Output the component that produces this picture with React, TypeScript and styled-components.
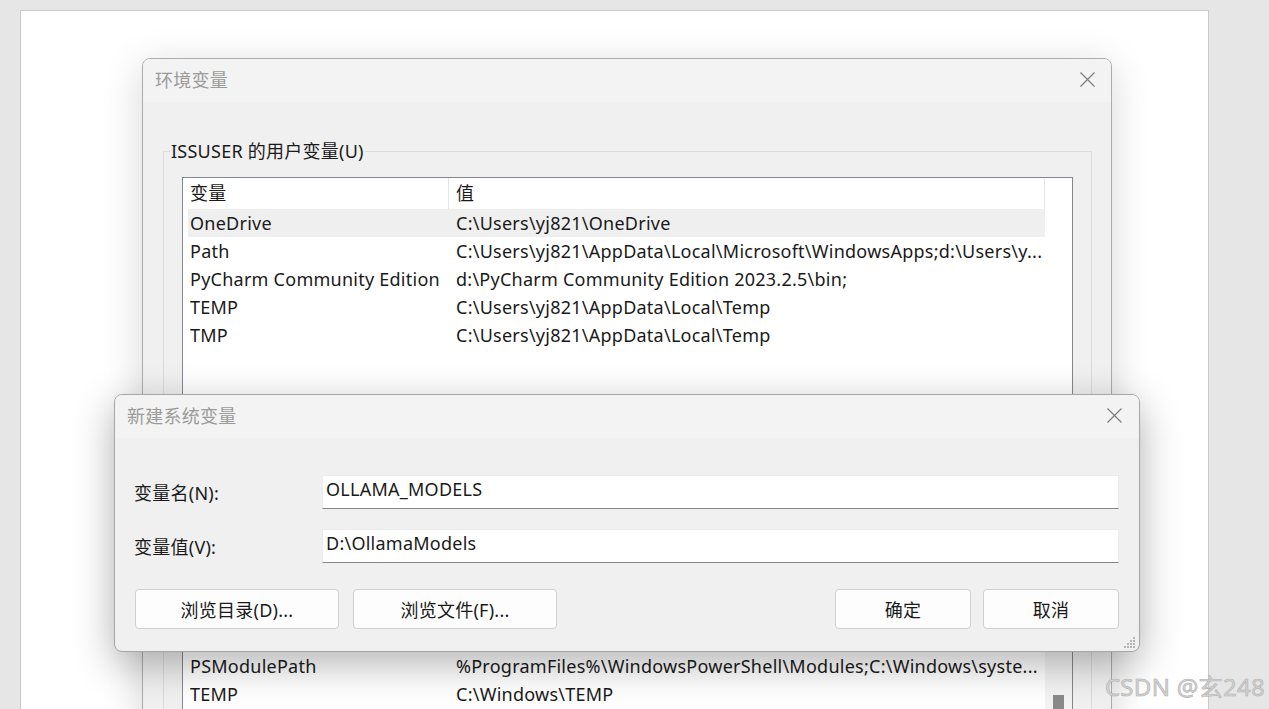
import React from 'react';
import styled, { createGlobalStyle } from 'styled-components';

const GlobalStyle = createGlobalStyle`
  html, body {
    margin: 0;
    padding: 0;
  }
  body {
    background: #e6e6e6;
    font-family: 'Noto Sans', 'Noto Sans CJK SC', sans-serif;
    letter-spacing: 0.25px;
    color: #1a1a1a;
  }
  * {
    box-sizing: border-box;
  }
`;

const Desktop = styled.div`
  position: relative;
  height: 100vh;
  overflow: hidden;
  padding: 10px 0 0 20px;
`;

const Page = styled.div`
  width: 1189px;
  height: 760px;
  background: #fff;
  border: 1px solid #cacaca;
  padding: 47px 0 0 121px;
`;

const Window = styled.div<{ $width: number }>`
  width: ${(p) => p.$width}px;
  background: #f0f0f0;
  border: 1px solid #acacac;
  border-radius: 8px;
  overflow: hidden;
`;

const EnvWindow = styled(Window)`
  box-shadow: 0 8px 40px rgba(0, 0, 0, 0.16);
`;

const DialogWindow = styled(Window)`
  position: absolute;
  left: 114px;
  top: 394px;
  height: 258px;
  border-color: #a6a6a6;
  box-shadow: 0 12px 40px rgba(0, 0, 0, 0.3);
`;

const TitleBar = styled.div<{ $right: number }>`
  height: 43px;
  background: #f3f3f3;
  display: flex;
  align-items: center;
  justify-content: space-between;
  padding: 0 ${(p) => p.$right}px 2px 12px;
`;

const Title = styled.div`
  font-size: 18px;
  color: #9a9a9a;
  line-height: 24px;
`;

const CloseIcon = () => (
  <svg width="15" height="15" viewBox="0 0 15 15">
    <path d="M0.5 0.5 L14.5 14.5 M14.5 0.5 L0.5 14.5" stroke="#7d7d7d" strokeWidth="1.2" fill="none" />
  </svg>
);

const EnvBody = styled.div`
  padding: 37px 19px 0 20px;
`;

const GroupBox = styled.fieldset<{ $top?: number; $padTop?: number; $padBottom?: number }>`
  margin: ${(p) => p.$top ?? 0}px 0 0 0;
  padding: ${(p) => p.$padTop ?? 14}px 18px ${(p) => p.$padBottom ?? 12}px 18px;
  border: 1px solid #dcdcdc;
  min-width: 0;
`;

const GroupLabel = styled.legend`
  font-size: 18px;
  line-height: 24px;
  padding: 0 1px;
  margin-left: -12px;
  color: #1a1a1a;
`;

const ListView = styled.div<{ $height: number }>`
  height: ${(p) => p.$height}px;
  background: #fff;
  border: 1px solid #828790;
  display: flex;
  overflow: hidden;
`;

const ListColumns = styled.div<{ $offset: number }>`
  width: 862px;
  flex: none;
  padding-top: ${(p) => p.$offset}px;
`;

const HeaderRow = styled.div`
  height: 31px;
  display: grid;
  grid-template-columns: 266px 596px;
  font-size: 18px;
  line-height: 30px;
`;

const HeaderCell = styled.div`
  padding-left: 7px;
  border-right: 1px solid #e5e5e5;
  white-space: nowrap;
`;

const Row = styled.div<{ $selected?: boolean }>`
  height: 28px;
  display: grid;
  grid-template-columns: 266px 596px;
  font-size: 18px;
  line-height: 28px;
  background: ${(p) => (p.$selected ? 'linear-gradient(to right, transparent 5px, #efefef 5px)' : 'transparent')};
`;

const Cell = styled.div`
  padding-left: 7px;
  white-space: nowrap;
  overflow: hidden;
`;

const ScrollTrack = styled.div<{ $visible?: boolean }>`
  flex: 1;
  background: ${(p) => (p.$visible ? '#f3f3f3' : '#fff')};
  display: flex;
  justify-content: center;
`;

const ScrollThumb = styled.div`
  width: 11px;
  height: 60px;
  margin-top: 158px;
  background: #8a8a8a;
`;

const ButtonRow = styled.div<{ $top: number }>`
  margin-top: ${(p) => p.$top}px;
  display: flex;
  align-items: center;
`;

const Spacer = styled.div`
  flex: 1;
`;

const Button = styled.button<{ $width: number }>`
  width: ${(p) => p.$width}px;
  height: 40px;
  background: #fdfdfd;
  border: 1px solid #d0d0d0;
  border-radius: 4px;
  font-family: inherit;
  letter-spacing: inherit;
  font-size: 18px;
  color: #1a1a1a;
  padding: 0;
`;

const ButtonGroup = styled.div<{ $gap: number }>`
  display: flex;
  gap: ${(p) => p.$gap}px;
`;

const DialogBody = styled.div`
  padding: 37px 20px 0 20px;
`;

const FieldGrid = styled.div`
  display: grid;
  grid-template-columns: 187px 1fr;
  row-gap: 20px;
  align-items: center;
`;

const FieldLabel = styled.div`
  font-size: 18px;
  margin-left: -1px;
  white-space: nowrap;
`;

const TextBox = styled.div`
  height: 34px;
  background: #fff;
  border: 1px solid #ececec;
  border-bottom-color: #868686;
  font-size: 18px;
  line-height: 26px;
  padding-left: 3px;
  white-space: nowrap;
`;

const Grip = styled.svg`
  position: absolute;
  right: 3px;
  bottom: 2px;
`;

const Watermark = styled.div`
  position: absolute;
  right: 4px;
  bottom: 7px;
  font-size: 24px;
  line-height: 30px;
  letter-spacing: 0.3px;
  color: #d2d2d2;
  -webkit-text-stroke: 0.6px #b2b2b2;
  white-space: nowrap;
`;

const userVars = [
  ['OneDrive', 'C:\\Users\\yj821\\OneDrive'],
  ['Path', 'C:\\Users\\yj821\\AppData\\Local\\Microsoft\\WindowsApps;d:\\Users\\y...'],
  ['PyCharm Community Edition', 'd:\\PyCharm Community Edition 2023.2.5\\bin;'],
  ['TEMP', 'C:\\Users\\yj821\\AppData\\Local\\Temp'],
  ['TMP', 'C:\\Users\\yj821\\AppData\\Local\\Temp'],
];

// the system list is scrolled: header and earlier rows sit under the new-variable dialog
const systemVars = [
  ['PSModulePath', '%ProgramFiles%\\WindowsPowerShell\\Modules;C:\\Windows\\syste...'],
  ['TEMP', 'C:\\Windows\\TEMP'],
];

const VarList: React.FC<{
  rows: string[][];
  height: number;
  scroll?: boolean;
  selected?: number;
  offset?: number;
}> = ({ rows, height, scroll, selected, offset }) => (
  <ListView $height={height}>
    <ListColumns $offset={offset ?? 0}>
      {offset === undefined && (
        <HeaderRow>
          <HeaderCell>变量</HeaderCell>
          <HeaderCell>值</HeaderCell>
        </HeaderRow>
      )}
      {rows.map(([name, value], i) => (
        <Row key={name + i} $selected={i === selected}>
          <Cell>{name}</Cell>
          <Cell>{value}</Cell>
        </Row>
      ))}
    </ListColumns>
    <ScrollTrack $visible={scroll}>{scroll && <ScrollThumb />}</ScrollTrack>
  </ListView>
);

export default function App() {
  return (
    <Desktop>
      <GlobalStyle />
      <Page>
        <EnvWindow $width={970}>
          <TitleBar $right={16}>
            <Title>环境变量</Title>
            <CloseIcon />
          </TitleBar>
          <EnvBody>
            <GroupBox $padBottom={64}>
              <GroupLabel>ISSUSER 的用户变量(U)</GroupLabel>
              <VarList rows={userVars} height={242} selected={0} />
            </GroupBox>
            <GroupBox $top={26} $padTop={25}>
              <VarList rows={systemVars} height={300} scroll offset={115} />
            </GroupBox>
          </EnvBody>
        </EnvWindow>
      </Page>

      <DialogWindow $width={1026}>
        <TitleBar $right={17}>
          <Title>新建系统变量</Title>
          <CloseIcon />
        </TitleBar>
        <DialogBody>
          <FieldGrid>
            <FieldLabel>变量名(N):</FieldLabel>
            <TextBox>OLLAMA_MODELS</TextBox>
            <FieldLabel>变量值(V):</FieldLabel>
            <TextBox>D:\OllamaModels</TextBox>
          </FieldGrid>
          <ButtonRow $top={26}>
            <ButtonGroup $gap={14}>
              <Button $width={204}>浏览目录(D)...</Button>
              <Button $width={204}>浏览文件(F)...</Button>
            </ButtonGroup>
            <Spacer />
            <ButtonGroup $gap={12}>
              <Button $width={136}>确定</Button>
              <Button $width={136}>取消</Button>
            </ButtonGroup>
          </ButtonRow>
        </DialogBody>
        <Grip width="12" height="12" viewBox="0 0 12 12">
          {[
            [9, 0],
            [6, 3],
            [9, 3],
            [3, 6],
            [6, 6],
            [9, 6],
            [0, 9],
            [3, 9],
            [6, 9],
            [9, 9],
          ].map(([x, y]) => (
            <rect key={`${x}-${y}`} x={x} y={y} width="2" height="2" fill="#b5b5b5" />
          ))}
        </Grip>
      </DialogWindow>

      <Watermark>CSDN @玄248</Watermark>
    </Desktop>
  );
}
